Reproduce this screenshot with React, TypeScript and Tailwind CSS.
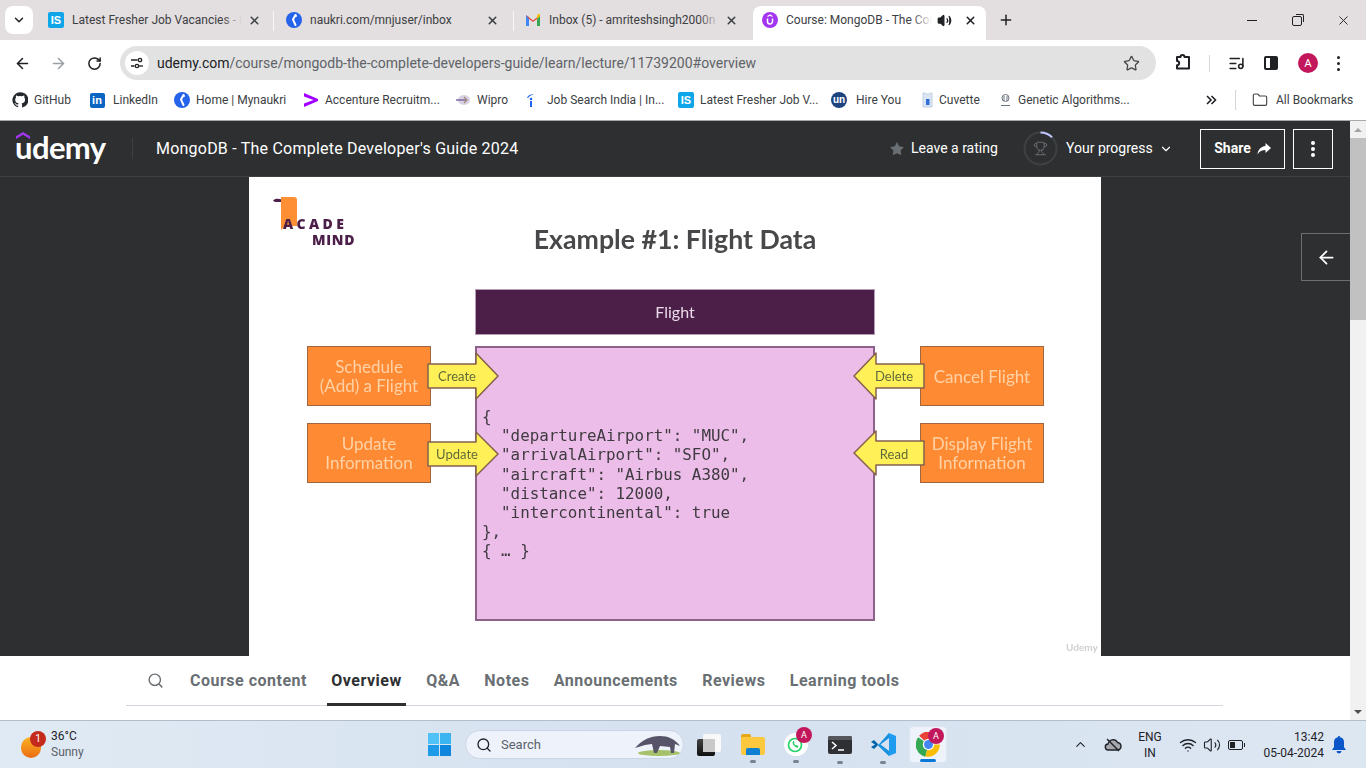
import { ArrowLeft, ArrowRight, ChevronDown, ChevronUp, Folder, ListMusic, Plus, RotateCw, Search, Star, Trophy, Volume2, Wifi, X } from 'lucide-react'

const chrome = "font-['Roboto','Noto_Sans',sans-serif]"

function IsIcon() {
  return (
    <div className="w-4 h-4 shrink-0 rounded-[2px] bg-[#0ea5e9] flex items-center justify-center text-white text-[11px] leading-none font-bold font-['Liberation_Sans',sans-serif]">
      IS
    </div>
  )
}

function NaukriIcon() {
  return (
    <svg width="16" height="16" viewBox="0 0 16 16" className="shrink-0">
      <circle cx="8" cy="8" r="8" fill="#2563eb" />
      <path d="M9.5 3 7 7.6 9.5 13" fill="none" stroke="#fff" strokeWidth="2" strokeLinecap="round" strokeLinejoin="round" />
      <circle cx="10" cy="4" r="1" fill="#fff" />
    </svg>
  )
}

function GmailIcon() {
  return (
    <svg width="16" height="14" viewBox="0 0 16 14" className="shrink-0">
      <path d="M1 13V3l7 5 7-5v10h-3V7L8 10 4 7v6z" fill="#e5e7eb" />
      <path d="M1 13V2l3 2.2V13z" fill="#4285f4" />
      <path d="M12 13V4.2L15 2v11z" fill="#34a853" />
      <path d="M1 2 8 7.4 15 2l-3 4L8 9 4 6z" fill="#ea4335" />
      <path d="M13 1h2v2l-3 3V3z" fill="#fbbc04" />
    </svg>
  )
}

function UdemyFav() {
  return (
    <svg width="16" height="16" viewBox="0 0 16 16" className="shrink-0">
      <circle cx="8" cy="8" r="8" fill="#a435f0" />
      <path d="M5.5 6.500v3a2.500 2.500 0 0 0 5 0v-3" fill="none" stroke="#fff" strokeWidth="1.500" />
      <path d="m5.500 4.400 2.500-1.400 2.500 1.400" fill="none" stroke="#fff" strokeWidth="1.200" />
    </svg>
  )
}

function ChromeTab({ className, closeClass, icon, title, fade, sep }: { className: string; closeClass: string; icon: React.ReactNode; title: string; fade?: boolean; sep?: boolean }) {
  return (
    <div className={`${className} w-[240px] h-[34px] pb-[6px] flex items-center relative shrink-0`}>
      {icon}
      <div className="ml-2 w-[170px] overflow-hidden whitespace-nowrap text-[12px] text-[#3c4043] relative">
        {title}
        {fade && <div className="absolute right-0 top-0 bottom-0 w-5 bg-gradient-to-r from-transparent to-[#e3dedf]" />}
      </div>
      <X size={13} strokeWidth={2.800} className={`${closeClass} ml-auto text-[#3c4043]`} />
      {sep && <div className="absolute -right-px top-[5px] h-[20px] w-px bg-[#f8f6f6]" />}
    </div>
  )
}

function Toolbar() {
  return (
    <div className="h-[46px] bg-white flex items-center rounded-t-[8px] shrink-0">
      <ArrowLeft size={17} strokeWidth={2.200} className="ml-[14px] text-[#202124]" />
      <ArrowRight size={17} strokeWidth={2.200} className="ml-[19px] text-[#9aa0a6]" />
      <RotateCw size={15} strokeWidth={2.400} className="ml-[20px] text-[#202124]" />
      <div className="ml-[18px] w-[1036px] h-[34px] rounded-full bg-[#e2e2e2] flex items-center pl-[5px]">
        <div className="w-6 h-6 rounded-full bg-white flex items-center justify-center">
          <svg width="14" height="14" viewBox="0 0 14 14" fill="none" stroke="#202124" strokeWidth="1.300">
            <path d="M1 4h6.500M1 10h3.500" />
            <circle cx="10" cy="4" r="1.700" />
            <circle cx="7" cy="10" r="1.700" />
            <path d="M9 10h4" />
          </svg>
        </div>
        <div className={`${chrome} ml-[8px] text-[14px] whitespace-nowrap text-[#5f6368]`}>
          <span className="text-[#202124]">udemy.com</span>/course/mongodb-the-complete-developers-guide/learn/lecture/11739200#overview
        </div>
        <Star size={17} strokeWidth={1.800} className="ml-auto mr-[16px] text-[#444746]" />
      </div>
      <svg width="18" height="18" viewBox="0 0 18 18" fill="none" stroke="#202124" strokeWidth="2" className="ml-[18px]">
        <path d="M3 3h3.500a2 2 0 0 1 4 0H15v11.500H3v-3.200a2 2 0 0 0 0-4.300z" strokeLinejoin="round" />
      </svg>
      <div className="ml-[17px] w-px h-[17px] bg-[#d9d5d5]" />
      <ListMusic size={17} strokeWidth={2.200} className="ml-[18px] text-[#202124]" />
      <div className="ml-[19px] w-[14px] h-[14px] rounded-[2px] border-2 border-[#202124] flex justify-end">
        <div className="w-[6px] h-full bg-[#202124]" />
      </div>
      <div className="ml-[20px] w-5 h-5 rounded-full bg-[#c2185b] text-white text-[11px] flex items-center justify-center">A</div>
      <div className="ml-[19px] flex flex-col gap-[3px]">
        <div className="w-[3px] h-[3px] rounded-full bg-[#202124]" />
        <div className="w-[3px] h-[3px] rounded-full bg-[#202124]" />
        <div className="w-[3px] h-[3px] rounded-full bg-[#202124]" />
      </div>
    </div>
  )
}

function Bookmark({ className, labelClass = 'ml-[6px]', icon, label }: { className: string; labelClass?: string; icon: React.ReactNode; label: string }) {
  return (
    <div className={`${className} flex items-center shrink-0 whitespace-nowrap`}>
      <div className="w-4 h-4 flex items-center justify-center">{icon}</div>
      <span className={labelClass}>{label}</span>
    </div>
  )
}

function BookmarksBar() {
  return (
    <div className={`${chrome} h-[35px] bg-white border-b border-[#a8a8a8] flex items-center pl-3 pb-[6px] text-[12px] text-[#3c4043] shrink-0`}>
      <Bookmark
        className="w-[77px]"
        label="GitHub"
        icon={
          <svg width="16" height="16" viewBox="0 0 24 24" fill="#24292f">
            <path d="M12 .5a11.500 11.500 0 0 0-3.600 22.400c.6.100.8-.3.8-.6v-2c-3.200.7-3.900-1.500-3.900-1.500-.5-1.300-1.300-1.700-1.300-1.700-1-.7.100-.7.100-.7 1.200.100 1.800 1.200 1.800 1.200 1 1.800 2.800 1.300 3.400 1 .1-.8.4-1.300.8-1.600-2.600-.3-5.300-1.300-5.300-5.700 0-1.300.5-2.300 1.200-3.100-.1-.3-.5-1.500.1-3.100 0 0 1-.3 3.200 1.200a11 11 0 0 1 5.800 0c2.200-1.500 3.200-1.200 3.200-1.200.6 1.600.2 2.800.1 3.100.8.8 1.200 1.800 1.200 3.100 0 4.400-2.700 5.400-5.300 5.700.4.400.8 1.100.8 2.200v3.300c0 .3.200.7.8.6A11.500 11.500 0 0 0 12 .5z" />
          </svg>
        }
      />
      <Bookmark
        className="w-[85px]"
        labelClass="ml-[8px]"
        label="LinkedIn"
        icon={<div className="w-[15px] h-[15px] rounded-[2px] bg-[#0a66c2] text-white text-[11px] leading-[15px] text-center font-bold font-['Liberation_Sans',sans-serif]">in</div>}
      />
      <Bookmark className="w-[129px]" label="Home | Mynaukri" icon={<NaukriIcon />} />
      <Bookmark
        className="w-[152px]"
        label="Accenture Recruitm..."
        icon={
          <svg width="16" height="16" viewBox="0 0 16 16">
            <path d="M1 1 15 7v2L1 15v-3.500L10.500 8 1 4.500z" fill="#a100ff" />
          </svg>
        }
      />
      <Bookmark
        className="w-[68px]"
        label="Wipro"
        icon={
          <svg width="16" height="12" viewBox="0 0 16 12">
            <ellipse cx="9" cy="6" rx="6" ry="5" fill="#d8d0e4" />
            <path d="M1 6h10" stroke="#7c6aa0" strokeWidth="1.500" />
            <path d="M9 3l3 3-3 3" fill="none" stroke="#a08a70" strokeWidth="1.200" />
          </svg>
        }
      />
      <Bookmark
        className="w-[155px]"
        labelClass="ml-[8px]"
        label="Job Search India | In..."
        icon={
          <svg width="10" height="15" viewBox="0 0 10 15">
            <path d="M1 4.500C2.500 2 5 1 8 1.200 5 2 3.500 3 2 5z" fill="#2164f3" />
            <circle cx="5" cy="6" r="1.300" fill="#2164f3" />
            <rect x="4" y="8" width="2" height="6" fill="#2164f3" />
          </svg>
        }
      />
      <Bookmark className="w-[153px]" label="Latest Fresher Job V..." icon={<IsIcon />} />
      <Bookmark
        className="w-[88px]"
        labelClass="ml-[9px]"
        label="Hire You"
        icon={<div className="w-4 h-4 rounded-full bg-[#1e4480] text-white text-[10px] leading-[15px] text-center font-bold font-['Liberation_Sans',sans-serif]">un</div>}
      />
      <Bookmark
        className="w-[78px]"
        labelClass="ml-[4px]"
        label="Cuvette"
        icon={
          <svg width="11" height="16" viewBox="0 0 11 16">
            <path d="M1 1h2l1 1h3l2-1h1v14H1z" fill="#dbe6f5" stroke="#b9c6da" strokeWidth=".8" />
            <rect x="4" y="7" width="3.500" height="6" fill="#2f6fd6" />
          </svg>
        }
      />
      <Bookmark
        className="w-[208px]"
        labelClass="ml-[5px]"
        label="Genetic Algorithms..."
        icon={
          <svg width="13" height="14" viewBox="0 0 13 14" fill="none" stroke="#6b7280" strokeWidth="1">
            <circle cx="6.500" cy="5" r="3.500" />
            <path d="M5 3v5M8 3v5M2 12.500h9" />
          </svg>
        }
      />
      <svg width="12" height="12" viewBox="0 0 12 12" fill="none" stroke="#202124" strokeWidth="1.600">
        <path d="m2 2 4 4-4 4M6.500 2l4 4-4 4" />
      </svg>
      <div className="ml-[18px] w-px h-[20px] bg-[#d9d5d5]" />
      <Folder size={16} strokeWidth={1.700} className="ml-4 text-[#444746]" />
      <span className="ml-2 whitespace-nowrap">All Bookmarks</span>
    </div>
  )
}

function CourseHeader() {
  return (
    <div className="h-[56px] bg-[#2d2f31] border-b border-[#3e4143] flex items-center font-['Roboto',sans-serif] text-white shrink-0">
      <div className="ml-[15px] w-[92px] relative font-['Lato',sans-serif] font-bold text-[31px] leading-none tracking-[-0.6px] pb-[2px]">
        udemy
        <svg width="14" height="7" viewBox="0 0 14 7" className="absolute left-[1px] top-0">
          <path d="M7 0 14 4.200V7L7 2.800 0 7V4.200z" fill="#a435f0" />
        </svg>
      </div>
      <div className="ml-[25px] w-px h-[21px] bg-[#3e4143]" />
      <div className="ml-[23px] text-[16px] tracking-[0.22px] w-[733px] whitespace-nowrap">MongoDB - The Complete Developer's Guide 2024</div>
      <Star size={16} fill="#6a6f73" strokeWidth={0} className="text-[#6a6f73]" />
      <span className="ml-[6px] text-[14px] w-[112px] whitespace-nowrap">Leave a rating</span>
      <div className="w-[35px] h-[35px] rounded-full relative flex items-center justify-center">
        <svg width="35" height="35" viewBox="0 0 35 35" fill="none" className="absolute inset-0">
          <circle cx="17.500" cy="17.500" r="16" stroke="#3e4143" strokeWidth="2" />
          <path d="M17.500 1.500A16 16 0 0 1 29 6.300" stroke="#c0c4fc" strokeWidth="2" />
        </svg>
        <Trophy size={15} strokeWidth={1.500} className="text-[#6a6f73]" />
      </div>
      <span className="ml-2 text-[14px] whitespace-nowrap w-[94px]">Your progress</span>
      <ChevronDown size={14} strokeWidth={2} className="ml-[-1px]" />
      <div className="ml-[27px] w-[85px] h-[40px] border border-white flex items-center justify-center gap-[6px] text-[14px] font-bold">
        Share
        <svg width="14" height="12" viewBox="0 0 14 12" fill="#fff">
          <path d="M8.500 0 14 5l-5.500 5V7C5 7 2.500 8 .5 11.500 1 7 3.500 3.500 8.500 3z" />
        </svg>
      </div>
      <div className="ml-2 w-10 h-10 border border-white flex flex-col items-center justify-center gap-[2px]">
        <div className="w-1 h-1 rounded-full bg-white" />
        <div className="w-1 h-1 rounded-full bg-white" />
        <div className="w-1 h-1 rounded-full bg-white" />
      </div>
    </div>
  )
}

function FlowArrow({ className, flip, height }: { className: string; flip?: boolean; height: number }) {
  const mid = height / 2
  const points = flip
    ? `1,${mid} 23,1 23,${mid - 12} 71,${mid - 12} 71,${mid + 12} 23,${mid + 12} 23,${height - 1}`
    : `71,${mid} 49,1 49,${mid - 12} 1,${mid - 12} 1,${mid + 12} 49,${mid + 12} 49,${height - 1}`
  return (
    <svg width="72" height={height} viewBox={`0 0 72 ${height}`} className={className}>
      <polygon points={points} fill="#fff057" stroke="#85604f" strokeWidth="1.500" strokeLinejoin="round" />
    </svg>
  )
}

function OrangeBox({ className, lines }: { className: string; lines: string[] }) {
  return (
    <div className={`${className} absolute w-[124px] h-[60px] bg-[#ff8a34] border border-[#a0663f] flex flex-col items-center justify-center text-[#ffd2a6] text-[17px] leading-[19px]`}>
      {lines.map((l) => (
        <div key={l} className="whitespace-nowrap">{l}</div>
      ))}
    </div>
  )
}

const json = `{
  "departureAirport": "MUC",
  "arrivalAirport": "SFO",
  "aircraft": "Airbus A380",
  "distance": 12000,
  "intercontinental": true
},
{ … }`

function Slide() {
  return (
    <div className="w-[852px] h-[479px] bg-white relative overflow-hidden font-['Lato',sans-serif] blur-[0.5px]">
      {/* academind logo */}
      <svg width="26" height="36" viewBox="0 0 26 36" className="absolute left-[24px] top-[20px]">
        <path d="M0 3.500C2 1.500 5 1.500 9 2.500V5H3C2 5 1 4.500 0 3.500z" fill="#4c1f49" />
        <path d="M8 0h13a3 3 0 0 1 3 3v26H12l-4 4z" fill="#ff8f35" />
      </svg>
      <div className="absolute left-[34px] top-[39px] font-['Open_Sans',sans-serif] text-[14px] leading-[16px] font-extrabold tracking-[3.400px] text-[#4c1f49]">ACADE</div>
      <div className="absolute left-[63px] top-[55px] font-['Open_Sans',sans-serif] text-[14px] leading-[16px] font-extrabold tracking-[0.700px] text-[#4c1f49]">MIND</div>

      <div className="absolute left-0 right-0 top-[45px] text-center text-[26.700px] leading-[34px] font-bold text-[#48484a]">Example #1: Flight Data</div>

      <div className="absolute left-[226px] top-[112px] w-[400px] h-[46px] pb-[1px] bg-[#4c1f49] border border-[#b79ab5] flex items-center justify-center text-[16px] text-[#ead9e8]">Flight</div>

      <div className="absolute left-[226px] top-[169px] w-[400px] h-[275px] bg-[#ebbde8] border-2 border-[#8c6289]" />
      <pre className="absolute left-[233px] top-[230px] font-['DejaVu_Sans_Mono',monospace] text-[15.850px] leading-[19.200px] text-[#3f3a40]">{json}</pre>

      <OrangeBox className="left-[58px] top-[169px]" lines={['Schedule', '(Add) a Flight']} />
      <OrangeBox className="left-[58px] top-[246px]" lines={['Update', 'Information']} />
      <OrangeBox className="left-[671px] top-[169px]" lines={['Cancel Flight']} />
      <OrangeBox className="left-[671px] top-[246px]" lines={['Display Flight', 'Information']} />

      <FlowArrow className="absolute left-[178px] top-[175px]" height={48} />
      <FlowArrow className="absolute left-[178px] top-[254px]" height={46} />
      <FlowArrow className="absolute left-[604px] top-[175px]" flip height={48} />
      <FlowArrow className="absolute left-[604px] top-[253px]" flip height={46} />

      <div className="absolute left-[180px] top-[191px] w-[56px] text-center text-[13px] leading-4 text-[#5f6b3a]">Create</div>
      <div className="absolute left-[180px] top-[269px] w-[56px] text-center text-[13px] leading-4 text-[#5f6b3a]">Update</div>
      <div className="absolute left-[620px] top-[191px] w-[50px] text-center text-[13px] leading-4 text-[#5f6b3a]">Delete</div>
      <div className="absolute left-[620px] top-[269px] w-[50px] text-center text-[13px] leading-4 text-[#5f6b3a]">Read</div>

      <div className="absolute left-[817px] top-[464px] text-[10px] leading-3 font-bold text-[#d0d0d0]">Udemy</div>
    </div>
  )
}

const courseTabs = ['Course content', 'Overview', 'Q&A', 'Notes', 'Announcements', 'Reviews', 'Learning tools']

function CourseTabs() {
  return (
    <div className="h-[64px] bg-white shrink-0 pl-[126px] pr-[127px] font-['Roboto',sans-serif]">
      <div className="h-[50px] border-b border-[#d1d7dc] flex items-center text-[16px] font-bold tracking-[0.5px] text-[#6a6f73]">
        <div className="w-[56px] flex pl-[21px] pb-[1px]">
          <Search size={17} strokeWidth={2} className="text-[#6a6f73]" />
        </div>
        <div className="flex gap-[16.400px] ml-[4px] h-full">
          {courseTabs.map((t) => (
            <div key={t} className={`relative h-full flex items-center px-1 pt-[1px] whitespace-nowrap ${t === 'Overview' ? 'text-[#2d2f31]' : ''}`}>
              {t}
              {t === 'Overview' && <div className="absolute left-0 right-0 -bottom-px h-[3px] bg-[#2d2f31]" />}
            </div>
          ))}
        </div>
      </div>
    </div>
  )
}

function Scrollbar() {
  return (
    <div className="w-4 bg-[#f1f1f1] flex flex-col items-center shrink-0">
      <div className="h-[17px] flex items-center justify-center">
        <div className="w-0 h-0 border-l-[4px] border-r-[4px] border-b-[4px] border-l-transparent border-r-transparent border-b-[#a3a3a3]" />
      </div>
      <div className="w-full h-[182px] bg-[#c1c1c1]" />
      <div className="mt-auto h-[17px] flex items-center justify-center">
        <div className="w-0 h-0 border-l-[4px] border-r-[4px] border-t-[4px] border-l-transparent border-r-transparent border-t-[#505050]" />
      </div>
    </div>
  )
}

function Dot({ className }: { className: string }) {
  return <div className={`${className} absolute w-[6px] h-[3px] rounded-full bg-[#7a8290]`} />
}

function Taskbar() {
  return (
    <div className={`${chrome} h-[48px] shrink-0 bg-gradient-to-r from-[#dfeaf4] via-[#d6e1f0] to-[#dce7f2] border-t border-[#b4bdcc] flex items-center relative`}>
      <div className="ml-[21px] w-5 h-[26px] relative">
        <div className="absolute left-0 top-[5px] w-5 h-[21px] rounded-full bg-gradient-to-b from-[#fbb321] to-[#ea6a13]" />
        <div className="absolute left-[9px] -top-[1px] w-4 h-4 rounded-full bg-[#c42b1c] text-white text-[10px] leading-4 text-center">1</div>
      </div>
      <div className="ml-[10px] w-[93px] text-[12px] leading-[16px] pb-[2px]">
        <div className="text-[#1f2328]">36°C</div>
        <div className="text-[#5b6168]">Sunny</div>
      </div>
      {/* windows start */}
      <div className="ml-[284px] w-[23px] h-[30px] grid grid-cols-2 gap-[1px] content-center">
        <div className="h-[11px] bg-[#4fc3f7]" />
        <div className="h-[11px] bg-[#3bb4f2]" />
        <div className="h-[11px] bg-[#1e9be8]" />
        <div className="h-[11px] bg-[#0f86de]" />
      </div>
      <div className="ml-[14px] w-[219px] h-[29px] rounded-full bg-[#eef3fb] border border-[#cbd5e5] flex items-center pl-[10px] relative">
        <Search size={16} strokeWidth={2} className="text-[#1f2328]" />
        <span className="ml-[9px] text-[13px] text-[#5b6168]">Search</span>
        <svg width="48" height="24" viewBox="0 0 48 24" className="absolute right-[1px] top-[2px]">
          <ellipse cx="25" cy="20" rx="21" ry="3" fill="#a5c26b" />
          <path d="M1 15C8 7 16 3 26 3c8 0 15 3 20 10l-5-2-1 9h-3l-1-6-10-1-3 7h-3l-2-9-7 1z" fill="#57546a" />
        </svg>
      </div>
      {/* pinned apps */}
      <div className="ml-[13px] w-[24px] h-[22px] relative">
        <div className="absolute right-0 top-0 w-[18px] h-[18px] rounded-[2px] bg-gradient-to-br from-[#f6f6f6] to-[#fbfbfb]" />
        <div className="absolute left-0 bottom-0 w-[18px] h-[17px] rounded-[2px] bg-gradient-to-b from-[#444] to-[#111]" />
        <div className="absolute left-[6px] top-[5px] w-[12px] h-[13px] bg-[#c9c9c9]" />
      </div>
      <div className="ml-[20px] w-[24px] h-[21px] relative">
        <div className="absolute left-0 top-0 w-[10px] h-[4px] rounded-t-[2px] bg-[#e6a817]" />
        <div className="absolute inset-x-0 top-[3px] bottom-0 rounded-[2px] bg-[#fcc93e]" />
        <div className="absolute left-[5px] right-[5px] bottom-0 h-[7px] rounded-t-[2px] bg-[#0e7fd1]" />
        <Dot className="left-[9px] -bottom-[8px]" />
      </div>
      <div className="ml-[19px] w-[24px] h-[23px] relative">
        <svg width="24" height="23" viewBox="0 0 24 23">
          <ellipse cx="12" cy="11.500" rx="12" ry="11.500" fill="#fff" />
          <circle cx="11" cy="12" r="6.500" fill="none" stroke="#25d366" strokeWidth="1.700" />
          <path d="M8.500 9c0 3 2 5 5 6l1-2-2-1-1 .6L10 10.800l.7-1-1-1.800z" fill="#25d366" />
        </svg>
        <div className="absolute -right-[4px] -top-[6px] w-4 h-4 rounded-full bg-[#c2185b] text-white text-[9px] leading-4 text-center">A</div>
        <Dot className="left-[9px] -bottom-[7px]" />
      </div>
      <div className="ml-[20px] w-[24px] h-[18px] relative">
        <div className="w-full h-full rounded-[2px] bg-[#2f3033] overflow-hidden">
          <div className="h-[4px] bg-[#55575c]" />
          <svg width="24" height="14" viewBox="0 0 24 14" fill="none" stroke="#fff" strokeWidth="1.500">
            <path d="m4 2 4 3.500L4 9M10 10h6" />
          </svg>
        </div>
        <Dot className="left-[9px] -bottom-[10px]" />
      </div>
      <div className="ml-[19px] w-[25px] h-[25px] relative">
        <svg width="25" height="25" viewBox="0 0 25 25">
          <path d="M18 1 25 4v17l-7 3L7 13.500z" fill="#1f9cf0" />
          <path d="M18 1v23L7 13.500z" fill="#0a7cc4" opacity=".4" />
          <path d="M18 6 9.500 12.500 18 19z" fill="#d4dfef" />
          <path d="M3 8 0 10l4 2.500L0 15l3 2 4.500-4.500z" fill="#0065a9" />
        </svg>
        <Dot className="left-[9px] -bottom-[7px]" />
      </div>
      <div className="ml-[13px] w-[38px] h-[37px] rounded-[4px] bg-[#eef2fa] border border-[#dfe5f0] relative flex items-center justify-center">
        <svg width="25" height="25" viewBox="0 0 24 24">
          <path d="M12 12 3 3.500A12 12 0 0 1 23 7z" fill="#ea4335" />
          <path d="M12 12 2 5a12 12 0 0 0 7 18.700z" fill="#34a853" />
          <path d="M12 12h11a12 12 0 0 1-14 11.700z" fill="#fbbc04" />
          <circle cx="12" cy="12" r="5.500" fill="#fff" />
          <circle cx="12" cy="12" r="4.300" fill="#4285f4" />
        </svg>
        <div className="absolute right-[2px] top-[1px] w-4 h-4 rounded-full bg-[#c2185b] text-white text-[9px] leading-4 text-center">A</div>
        <div className="absolute left-[10px] bottom-[0px] w-[16px] h-[3px] rounded-full bg-[#0a78d7]" />
      </div>
      {/* system tray */}
      <ChevronUp size={15} strokeWidth={1.800} className="ml-[126px] text-[#1f2328]" />
      <svg width="18" height="18" viewBox="0 0 18 18" fill="none" stroke="#1f2328" strokeWidth="1.400" className="ml-[16px]">
        <path d="M4.500 14a3 3 0 0 1-.4-6A5 5 0 0 1 13.500 6.500 3.800 3.800 0 0 1 14 14z" fill="#a5a8ad" />
        <path d="m3 3 12 12" />
      </svg>
      <div className="ml-[14px] w-[28px] text-[12px] leading-[16px] text-center text-[#1f2328]">
        <div>ENG</div>
        <div>IN</div>
      </div>
      <Wifi size={18} strokeWidth={1.800} className="ml-[15px] text-[#1f2328]" />
      <Volume2 size={18} strokeWidth={1.500} className="ml-[6px] text-[#1f2328]" />
      <div className="ml-[7px] w-[15px] h-[10px] border border-[#1f2328] rounded-[2px] p-[1px] relative">
        <div className="w-[5px] h-full bg-[#1f2328]" />
        <div className="absolute -right-[3px] top-[2px] w-[1px] h-[4px] bg-[#1f2328]" />
      </div>
      <div className="ml-[10px] w-[71px] text-[12px] leading-[16px] text-right text-[#1f2328]">
        <div>13:42</div>
        <div>05-04-2024</div>
      </div>
      <svg width="14" height="18" viewBox="0 0 14 18" fill="#0b57c9" className="ml-[8px]">
        <path d="M7 0a1 1 0 0 1 1 1.200A5 5 0 0 1 12 6v5l2 3H0l2-3V6a5 5 0 0 1 4-4.800A1 1 0 0 1 7 0zM4.500 15h5a2.500 2.500 0 0 1-5 0z" />
      </svg>
    </div>
  )
}

export default function App() {
  return (
    <div className="w-[1366px] h-[768px] overflow-hidden flex flex-col bg-white">
      <div className={`${chrome} h-[40px] bg-[#e3dedf] flex items-end shrink-0 relative`}>
        <div className="ml-[5px] mb-[6px] w-[28px] h-[28px] rounded-[8px] bg-white flex items-center justify-center shrink-0">
          <ChevronDown size={14} strokeWidth={2.500} className="text-[#202124]" />
        </div>
        <ChromeTab className="pl-[15px]" closeClass="mr-[12px]" icon={<IsIcon />} title="Latest Fresher Job Vacancies - In" fade sep />
        <ChromeTab className="pl-[13px]" closeClass="mr-[14px]" icon={<NaukriIcon />} title="naukri.com/mnjuser/inbox" sep />
        <ChromeTab className="pl-[12px]" closeClass="mr-[15px]" icon={<GmailIcon />} title="Inbox (5) - amriteshsingh2000n" fade />
        <div className="w-[233px] h-[34px] pb-[6px] bg-white rounded-t-[8px] flex items-center pl-[9px] shrink-0">
          <UdemyFav />
          <div className="ml-2 w-[146px] overflow-hidden whitespace-nowrap text-[12px] text-[#3c4043] relative">
            Course: MongoDB - The Complete
            <div className="absolute right-0 top-0 bottom-0 w-5 bg-gradient-to-r from-transparent to-white" />
          </div>
          <Volume2 size={15} fill="#202124" strokeWidth={2} className="ml-[5px] text-[#202124]" />
          <X size={13} strokeWidth={2.800} className="ml-[12px] text-[#202124]" />
        </div>
        <Plus size={16} strokeWidth={2.200} className="ml-[12px] mb-[12px] text-[#202124]" />
        <div className="ml-auto flex items-center mb-[12px] mr-[15px] text-[#202124]">
          <div className="w-[10px] h-px bg-[#202124]" />
          <div className="ml-[35px] w-[10px] h-[10px] border border-[#202124] rounded-[2px] relative">
            <div className="absolute -top-[3px] -right-[3px] w-[8px] h-[8px] border-t border-r border-[#202124] rounded-tr-[2px]" />
          </div>
          <X size={15} strokeWidth={1.500} className="ml-[34px]" />
        </div>
      </div>
      <Toolbar />
      <BookmarksBar />
      <div className="flex-1 flex min-h-0">
        <div className="flex-1 flex flex-col min-w-0">
          <CourseHeader />
          <div className="flex-1 bg-[#2d2f31] flex justify-center relative min-h-0">
            <Slide />
            <div className="absolute right-0 top-[56px] w-[49px] h-[48px] border border-r-0 border-[#6a6f73] flex items-center justify-center">
              <ArrowLeft size={21} strokeWidth={2} className="text-white" />
            </div>
          </div>
          <CourseTabs />
        </div>
        <Scrollbar />
      </div>
      <Taskbar />
    </div>
  )
}
